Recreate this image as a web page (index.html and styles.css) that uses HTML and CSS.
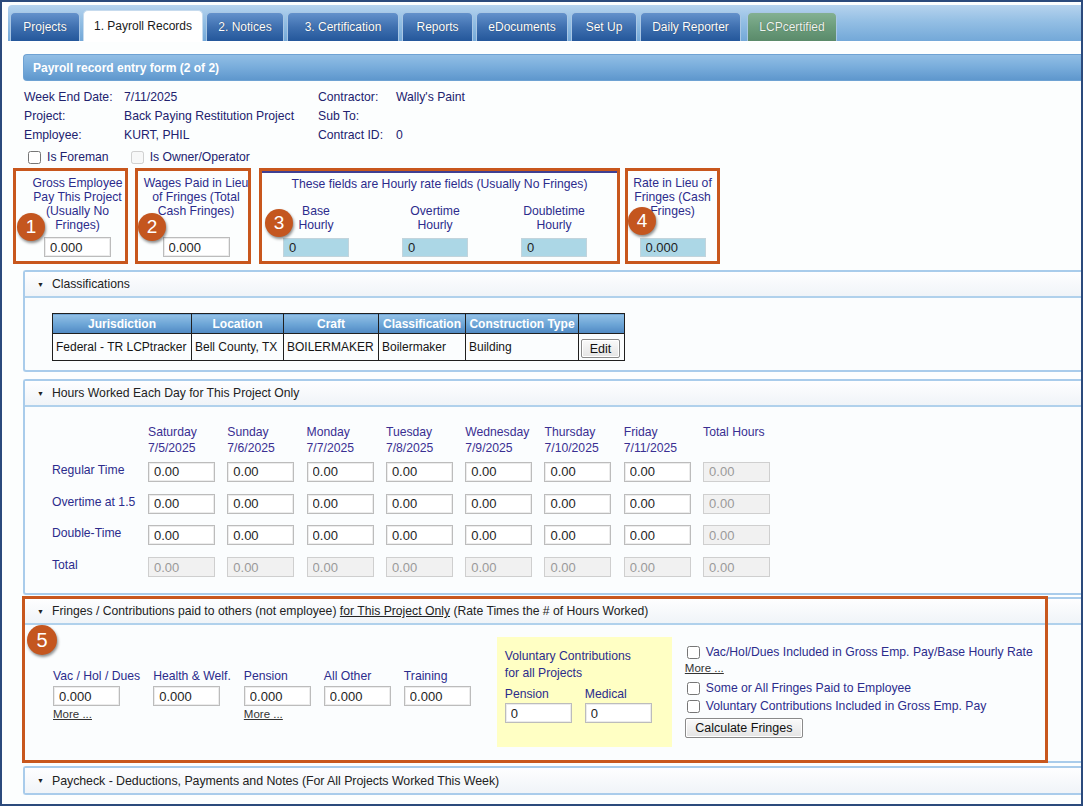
FILE: index.html
```html
<!DOCTYPE html>
<html>
<head>
<meta charset="utf-8">
<title>Payroll record entry form</title>
<link rel="stylesheet" href="styles.css">
</head>
<body>
<div class="frame">
  <div class="tabbar">
    <div class="tab t1">Projects</div>
    <div class="tab t2 active">1. Payroll Records</div>
    <div class="tab t3">2. Notices</div>
    <div class="tab t4">3. Certification</div>
    <div class="tab t5">Reports</div>
    <div class="tab t6">eDocuments</div>
    <div class="tab t7">Set Up</div>
    <div class="tab t8">Daily Reporter</div>
    <div class="tab t9 green">LCPcertified</div>
  </div>

  <div class="formhead">Payroll record entry form (2 of 2)</div>

  <div class="info">
    <span>Week End Date:</span><span>7/11/2025</span><span>Contractor:</span><span>Wally's Paint</span>
    <span>Project:</span><span>Back Paying Restitution Project</span><span>Sub To:</span><span></span>
    <span>Employee:</span><span>KURT, PHIL</span><span>Contract ID:</span><span>0</span>
  </div>

  <div class="checks">
    <label class="chk"><input type="checkbox"><span>Is Foreman</span></label>
    <label class="chk dis"><input type="checkbox" disabled><span>Is Owner/Operator</span></label>
  </div>

  <div class="boxes">
    <div class="box b1">
      <div class="btext">Gross Employee<br>Pay This Project<br>(Usually No<br>Fringes)</div>
      <input class="fld" value="0.000">
      <span class="badge">1</span>
    </div>
    <div class="box b2">
      <div class="btext">Wages Paid in Lieu<br>of Fringes (Total<br>Cash Fringes)</div>
      <input class="fld" value="0.000">
      <span class="badge">2</span>
    </div>
    <div class="box b3">
      <div class="b3line"></div>
      <div class="b3title">These fields are Hourly rate fields (Usually No Fringes)</div>
      <div class="b3cols">
        <div class="b3col"><div class="btext">Base<br>Hourly</div><input class="fld blue" value="0"></div>
        <div class="b3col"><div class="btext">Overtime<br>Hourly</div><input class="fld blue" value="0"></div>
        <div class="b3col"><div class="btext">Doubletime<br>Hourly</div><input class="fld blue" value="0"></div>
      </div>
      <span class="badge">3</span>
    </div>
    <div class="box b4">
      <div class="btext">Rate in Lieu of<br>Fringes (Cash<br>Fringes)</div>
      <input class="fld blue" value="0.000">
      <span class="badge">4</span>
    </div>
  </div>

  <div class="panel p-class">
    <div class="phead"><span class="arrow">&#9660;</span>Classifications</div>
    <div class="pbody class-body">
      <table class="ctable">
        <thead>
          <tr><th class="c1">Jurisdiction</th><th class="c2">Location</th><th class="c3">Craft</th><th class="c4">Classification</th><th class="c5">Construction Type</th><th class="c6"></th></tr>
        </thead>
        <tbody>
          <tr><td>Federal - TR LCPtracker</td><td>Bell County, TX</td><td>BOILERMAKER</td><td>Boilermaker</td><td>Building</td><td class="editcell"><button class="btn edit">Edit</button></td></tr>
        </tbody>
      </table>
    </div>
  </div>

  <div class="panel p-hours">
    <div class="phead"><span class="arrow">&#9660;</span>Hours Worked Each Day for This Project Only</div>
    <div class="pbody hours-body">
      <div class="hgrid">
        <span></span>
        <span class="dh">Saturday<br>7/5/2025</span>
        <span class="dh">Sunday<br>7/6/2025</span>
        <span class="dh">Monday<br>7/7/2025</span>
        <span class="dh">Tuesday<br>7/8/2025</span>
        <span class="dh">Wednesday<br>7/9/2025</span>
        <span class="dh">Thursday<br>7/10/2025</span>
        <span class="dh">Friday<br>7/11/2025</span>
        <span class="dh">Total Hours</span>

        <span class="rl">Regular Time</span>
        <input class="fld" value="0.00"><input class="fld" value="0.00"><input class="fld" value="0.00"><input class="fld" value="0.00"><input class="fld" value="0.00"><input class="fld" value="0.00"><input class="fld" value="0.00"><input class="fld dis" value="0.00" disabled>

        <span class="rl">Overtime at 1.5</span>
        <input class="fld" value="0.00"><input class="fld" value="0.00"><input class="fld" value="0.00"><input class="fld" value="0.00"><input class="fld" value="0.00"><input class="fld" value="0.00"><input class="fld" value="0.00"><input class="fld dis" value="0.00" disabled>

        <span class="rl">Double-Time</span>
        <input class="fld" value="0.00"><input class="fld" value="0.00"><input class="fld" value="0.00"><input class="fld" value="0.00"><input class="fld" value="0.00"><input class="fld" value="0.00"><input class="fld" value="0.00"><input class="fld dis" value="0.00" disabled>

        <span class="rl">Total</span>
        <input class="fld dis" value="0.00" disabled><input class="fld dis" value="0.00" disabled><input class="fld dis" value="0.00" disabled><input class="fld dis" value="0.00" disabled><input class="fld dis" value="0.00" disabled><input class="fld dis" value="0.00" disabled><input class="fld dis" value="0.00" disabled><input class="fld dis" value="0.00" disabled>
      </div>
    </div>
  </div>

  <div class="panel p-fringe">
    <div class="phead"><span class="arrow">&#9660;</span>Fringes / Contributions paid to others (not employee)&nbsp;<u>for This Project Only</u>&nbsp;(Rate Times the # of Hours Worked)</div>
    <div class="pbody fringe-body">
      <div class="fgroup">
        <div class="ff"><span class="fl">Vac / Hol / Dues</span><input class="fld" value="0.000"><a class="more">More ...</a></div>
        <div class="ff"><span class="fl">Health &amp; Welf.</span><input class="fld" value="0.000"></div>
        <div class="ff"><span class="fl">Pension</span><input class="fld" value="0.000"><a class="more">More ...</a></div>
        <div class="ff"><span class="fl">All Other</span><input class="fld" value="0.000"></div>
        <div class="ff"><span class="fl">Training</span><input class="fld" value="0.000"></div>
      </div>
      <div class="yellow">
        <div class="ytitle">Voluntary Contributions<br>for all Projects</div>
        <div class="yrow">
          <div class="yf"><span class="fl">Pension</span><input class="fld" value="0"></div>
          <div class="yf"><span class="fl">Medical</span><input class="fld" value="0"></div>
        </div>
      </div>
      <div class="fopts">
        <label class="chk opt"><input type="checkbox"><span>Vac/Hol/Dues Included in Gross Emp. Pay/Base Hourly Rate</span></label>
        <a class="more more2">More ...</a>
        <label class="chk opt"><input type="checkbox"><span>Some or All Fringes Paid to Employee</span></label>
        <label class="chk opt"><input type="checkbox"><span>Voluntary Contributions Included in Gross Emp. Pay</span></label>
        <button class="btn calc">Calculate Fringes</button>
      </div>
    </div>
    <div class="annot"></div>
    <span class="badge b5">5</span>
  </div>

  <div class="panel p-pay">
    <div class="phead nob"><span class="arrow">&#9660;</span><span class="paytext">Paycheck - Deductions, Payments and Notes (For All Projects Worked This Week)</span></div>
  </div>
</div>
</body>
</html>
```

FILE: styles.css
```css
* { box-sizing: border-box; }
html, body { margin: 0; padding: 0; background: #ffffff; }
body { font-family: "Liberation Sans", Arial, sans-serif; font-size: 12.2px; color: #26267a; }

.frame {
  width: 1083px;
  height: 806px;
  border: 2px solid #2b4a7c;
  background: #fcfefe;
  overflow: hidden;
  padding-top: 3px;
}

/* tabs */
.tabbar {
  margin-left: 6px;
  height: 37px;
  background: linear-gradient(to bottom, #b6d3ee 0%, #94bfe4 45%, #73a8d8 100%);
  border-radius: 4px 0 0 0;
  border-bottom: 1px solid #ffffff;
  display: flex;
  align-items: flex-end;
  padding-left: 2px;
  gap: 3px;
}
.tab {
  height: 29px;
  display: flex;
  align-items: center;
  justify-content: center;
  font-size: 12px;
  color: #ffffff;
  text-shadow: 0 0 1px rgba(0,0,0,0.5);
  background: linear-gradient(to bottom, #6391cb 0%, #3f70b0 50%, #24579b 100%);
  border: 1px solid #a9c7e5;
  border-bottom: none;
  border-radius: 5px 5px 0 0;
  white-space: nowrap;
}
.t1 { width: 70px; }
.t2 { width: 120px; }
.t3 { width: 78px; }
.t4 { width: 112px; }
.t5 { width: 71px; }
.t6 { width: 92px; }
.t7 { width: 66px; }
.t8 { width: 101px; }
.t9 { width: 90px; }
.tab.active {
  height: 31px;
  background: #ffffff;
  color: #1a1a1a;
  text-shadow: none;
  border-color: #c7dbee;
}
.tab.green {
  background: linear-gradient(to bottom, #83b092 0%, #6c9d7c 50%, #5a8a6a 100%);
  color: #eef5ee;
  margin-left: 3px;
}

/* form header */
.formhead {
  margin: 12px 0 0 21px;
  height: 27px;
  background: linear-gradient(to bottom, #91bee5 0%, #78acdb 50%, #5e97cd 100%);
  border: 1px solid #6ea2d3;
  border-right: none;
  border-radius: 4px 0 0 4px;
  color: #ffffff;
  font-weight: bold;
  font-size: 12px;
  display: flex;
  align-items: center;
  padding-left: 9px;
}

.info {
  margin: 6px 0 0 22px;
  display: grid;
  grid-template-columns: 100px 194px 78px auto;
  grid-auto-rows: 19px;
  align-items: center;
  color: #22226e;
}

.checks {
  margin: 5px 0 0 24px;
  display: flex;
  height: 16px;
  align-items: center;
  color: #22226e;
}
.chk { display: inline-flex; align-items: center; }
.chk input { margin: 0 6px 0 2px; width: 13px; height: 13px; }
.checks .chk.dis { margin-left: 20px; }

/* annotation boxes */
.boxes {
  margin: 3px 0 0 11px;
  display: flex;
  height: 96px;
}
.box {
  position: relative;
  height: 96px;
  border: 3px solid #c8571d;
  display: flex;
  flex-direction: column;
  align-items: center;
  justify-content: space-between;
  padding: 5px 0 4px;
  color: #2c2c8c;
  background: #fcfefe;
}
.btext { text-align: center; line-height: 14px; white-space: nowrap; }
.b1 { width: 115px; padding-left: 14px; }
.b2 { width: 116px; margin-left: 7px; padding-left: 6px; overflow: hidden; }
.b3 { width: 361px; margin-left: 8px; padding-top: 0; justify-content: flex-start; }
.b4 { width: 95px; margin-left: 5px; }
.b3line { width: 100%; height: 2px; background: #3f3f92; }
.b3title { margin-top: 4px; line-height: 14px; }
.b3cols { margin-top: auto; display: flex; gap: 11px; align-self: flex-start; }
.b3col { width: 108px; display: flex; flex-direction: column; align-items: center; gap: 6px; }

.fld {
  width: 67px;
  height: 20px;
  border: 1px solid #bcbcbc;
  box-shadow: inset 0 0 0 1px #ececec;
  background: #ffffff;
  font-family: "Liberation Sans", Arial, sans-serif;
  font-size: 13px;
  color: #1e1e1e;
  padding: 0 0 0 5px;
  margin: 0;
  outline: none;
}
.fld.blue { background: #acd7e6; border-color: #c2d4dc; box-shadow: none; width: 66px; height: 19px; }
.fld.dis { background: #f1f1f1; color: #9a9a9a; border-color: #cfcfcf; box-shadow: none; }

.badge {
  position: absolute;
  width: 28px;
  height: 28px;
  border-radius: 50%;
  background: #c4561f;
  color: #ffffff;
  font-size: 19px;
  line-height: 28px;
  text-align: center;
  box-shadow: 1px 2px 3px rgba(0,0,0,0.45);
  font-family: "Liberation Sans", Arial, sans-serif;
}
.b1 .badge { left: 1px; top: 42px; }
.b2 .badge { left: 0; top: 42px; }
.b3 .badge { left: 3px; top: 38px; }
.b4 .badge { left: 0; top: 36px; }

/* panels */
.panel {
  position: relative;
  margin-left: 21px;
  border: 2px solid #a9cceb;
  border-right: none;
  border-radius: 3px 0 0 3px;
  background: #fbfdfe;
}
.phead {
  height: 26px;
  display: flex;
  align-items: center;
  padding-left: 12px;
  background: linear-gradient(to bottom, #fefeff 0%, #f0f4f8 100%);
  border-bottom: 2px solid #b0d1ec;
  color: #222222;
  font-size: 12.2px;
  white-space: nowrap;
}
.phead.nob { border-bottom: none; height: 25px; }
.arrow { font-size: 7px; margin-right: 8px; color: #222; }
.paytext { font-size: 12.4px; letter-spacing: -0.05px; }

.p-class { margin-top: 6px; }
.class-body { padding: 15px 0 9px 27px; }
.ctable { border-collapse: collapse; font-size: 12px; color: #151515; }
.ctable th, .ctable td { border: 1px solid #1f1f1f; padding: 0 3px; white-space: nowrap; }
.ctable th {
  height: 20px;
  color: #ffffff;
  font-weight: bold;
  text-align: center;
  background: linear-gradient(to bottom, #93c1e6 0%, #6ea6d7 50%, #4f89c3 100%);
}
.ctable td { height: 27px; text-align: left; vertical-align: top; padding-top: 6px; }
.c1 { width: 139px; } .c2 { width: 92px; } .c3 { width: 95px; } .c4 { width: 87px; } .c5 { width: 113px; } .c6 { width: 46px; }
.ctable td.editcell { padding: 5px 0 0 2px; }

.btn {
  font-family: "Liberation Sans", Arial, sans-serif;
  font-size: 12.5px;
  color: #111;
  background: linear-gradient(to bottom, #fafafa, #e4e4e4);
  border: 1px solid #8a8a8a;
  border-radius: 2px;
  box-shadow: inset 0 0 0 1px #ffffff;
  padding: 0 6px;
  height: 19px;
}
.btn.edit { width: 39px; padding: 0; }

.p-hours { margin-top: 7px; }
.hours-body { padding: 17px 0 16px 27px; }
.hgrid {
  display: grid;
  grid-template-columns: 96px repeat(8, 79.3px);
  grid-template-rows: 26.3px repeat(4, 20px);
  row-gap: 11.7px;
  align-items: start;
}
.hgrid .dh { line-height: 16px; color: #3a2f92; white-space: nowrap; }
.hgrid .rl { line-height: 16px; color: #2c2c8c; white-space: nowrap; }
.hgrid .fld { height: 20px; }

.p-fringe { margin-top: 2px; }
.fringe-body { display: flex; align-items: flex-start; padding: 12px 0 12px 28px; height: 136px; }
.fgroup { display: flex; gap: 13px; padding-top: 32px; }
.ff { display: flex; flex-direction: column; align-items: flex-start; }
.fl { line-height: 14px; margin-bottom: 3px; color: #2c2c8c; white-space: nowrap; }
.more { font-size: 11.5px; color: #333; text-decoration: underline; line-height: 14px; margin-top: 1px; }
.yellow {
  margin-left: 26px;
  width: 175px;
  height: 110px;
  background: #ffffc4;
  padding: 11px 0 0 8px;
  color: #2c2c8c;
}
.ytitle { line-height: 17px; }
.yrow { display: flex; gap: 13px; margin-top: 5px; }
.yf { display: flex; flex-direction: column; }
.yf .fl { margin-bottom: 2px; }
.fopts { margin-left: 13px; display: flex; flex-direction: column; align-items: flex-start; padding-top: 6px; color: #2c2c8c; }
.opt { height: 18px; }
.opt input { margin: 0 6px 0 2px; }
.more2 { margin: 0 0 4px 0; line-height: 14px; }
.calc { margin-top: 3px; height: 20px; width: 118px; font-size: 12.5px; }

.annot {
  position: absolute;
  left: -3px;
  top: -3px;
  width: 1026px;
  height: 167px;
  border: 3px solid #c8571d;
  pointer-events: none;
}
.badge.b5 { width: 30px; height: 30px; line-height: 30px; left: 2px; top: 26px; font-size: 20px; }

.p-pay { margin-top: 3px; }
```
